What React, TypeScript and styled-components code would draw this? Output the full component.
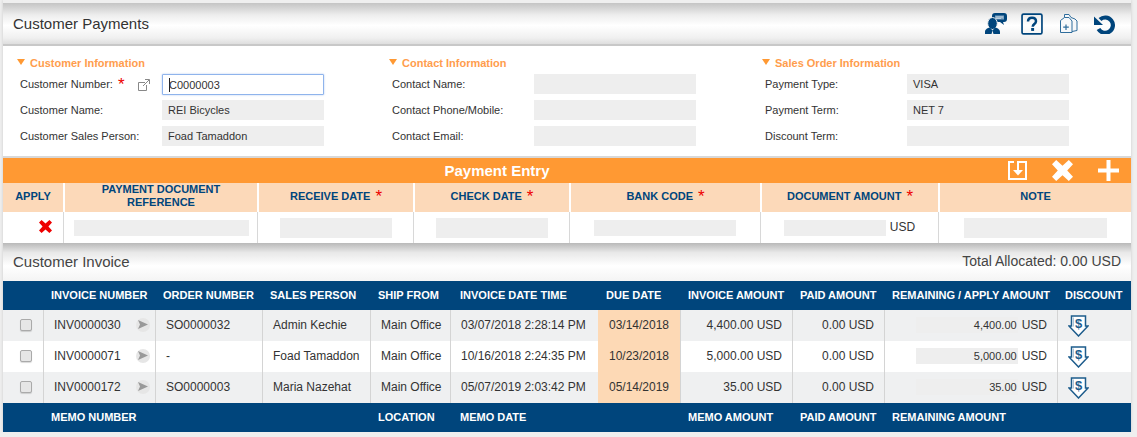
import styled, { createGlobalStyle } from "styled-components";

const GlobalStyle = createGlobalStyle`
  html, body {
    margin: 0;
    padding: 0;
    background: #efefef;
    font-family: "Liberation Sans", Arial, sans-serif;
    color: #333;
  }
`;

const ORANGE = "#ff9933";
const NAVY = "#00457c";
const PEACH = "#fcd9b9";
const FIELD = "#eeeeee";

const INVOICE_COLS = "40px 112px 107px 108px 80px 148px 82px 112px 92px 173px 74px";
const ENTRY_COLS = "60px 194px 156px 156px 191px 178px 193px";

const customerFields = [
  { label: "Customer Name:", value: "REI Bicycles" },
  { label: "Customer Sales Person:", value: "Foad Tamaddon" },
];

const contactFields = ["Contact Name:", "Contact Phone/Mobile:", "Contact Email:"];

const orderFields = [
  { label: "Payment Type:", value: "VISA" },
  { label: "Payment Term:", value: "NET 7" },
  { label: "Discount Term:", value: "" },
];

const entryHeads = [
  { text: "APPLY" },
  { text: "PAYMENT DOCUMENT REFERENCE", narrow: true },
  { text: "RECEIVE DATE", required: true },
  { text: "CHECK DATE", required: true },
  { text: "BANK CODE", required: true },
  { text: "DOCUMENT AMOUNT", required: true },
  { text: "NOTE" },
];

const invoiceHeads = [
  "",
  "INVOICE NUMBER",
  "ORDER NUMBER",
  "SALES PERSON",
  "SHIP FROM",
  "INVOICE DATE TIME",
  "DUE DATE",
  "INVOICE AMOUNT",
  "PAID AMOUNT",
  "REMAINING / APPLY AMOUNT",
  "DISCOUNT",
];

const memoHeads = [
  "",
  "MEMO NUMBER",
  "",
  "",
  "LOCATION",
  "MEMO DATE",
  "",
  "MEMO AMOUNT",
  "PAID AMOUNT",
  "REMAINING AMOUNT",
  "",
];

const invoices = [
  {
    number: "INV0000030",
    order: "SO0000032",
    person: "Admin Kechie",
    date: "03/07/2018 2:28:14 PM",
    due: "03/14/2018",
    amount: "4,400.00",
  },
  {
    number: "INV0000071",
    order: "-",
    person: "Foad Tamaddon",
    date: "10/16/2018 2:24:35 PM",
    due: "10/23/2018",
    amount: "5,000.00",
  },
  {
    number: "INV0000172",
    order: "SO0000003",
    person: "Maria Nazehat",
    date: "05/07/2019 2:03:42 PM",
    due: "05/14/2019",
    amount: "35.00",
  },
];

const SupportIcon = () => (
  <svg width="22" height="21" viewBox="0 0 22 21">
    <path
      d="M10 0h9a3 3 0 0 1 3 3v3a3 3 0 0 1-3 3h-1l1 3-4-3h-5a3 3 0 0 1-3-3V3a3 3 0 0 1 3-3z"
      fill={NAVY}
    />
    <path d="M10 2.500h9v4h-9z" fill="#7fa3c0" />
    <path d="M11 4h7M11 5.500h5" stroke="#d5e2ec" strokeWidth="0.700" />
    <ellipse cx="7.500" cy="10.500" rx="4.800" ry="6" fill={NAVY} stroke="#eef0f1" strokeWidth="1" />
    <path d="M0 21v-2c0-3 3-4 5-4.500l2.500 3 2.500-3c2 .5 5 1.500 5 4.500v2z" fill={NAVY} />
    <path d="M7.500 17.500l-1 3.500h2z" fill="#eef0f1" />
  </svg>
);

const HelpIcon = () => (
  <svg width="22" height="22" viewBox="0 0 21 21">
    <rect x="1" y="1" width="19" height="19" rx="1.500" fill="none" stroke={NAVY} strokeWidth="1.600" />
    <path
      d="M6.700 8.200C6.700 5.700 8.300 4.500 10.500 4.500s3.800 1.200 3.800 3.300c0 2.800-3.100 2.700-3.100 5.400"
      fill="none"
      stroke={NAVY}
      strokeWidth="2.400"
    />
    <rect x="9.700" y="14.300" width="2.800" height="2.800" fill={NAVY} />
  </svg>
);

const CopyIcon = () => (
  <svg width="18" height="19" viewBox="0 0 18 19">
    <path d="M4.500 3V.5h4.500l2 3 4 1.500 2 2v9.500l-5 1z" fill="#f6f8fa" stroke="#2f6d9c" strokeWidth="1" />
    <path d="M.5 6.500l4-3H9l3 3.500v11.500H.5z" fill="#f6f8fa" stroke="#2f6d9c" strokeWidth="1" />
    <path d="M6 10.500v5.500M3.200 13.200h5.600" stroke="#2f6d9c" strokeWidth="1.200" />
  </svg>
);

const UndoIcon = () => (
  <svg width="21" height="20" viewBox="0 0 21 20">
    <path d="M6 5.500A7.700 7.700 0 1 1 4.500 15" fill="none" stroke={NAVY} strokeWidth="4.200" />
    <path d="M0 2.500v8.500h9z" fill={NAVY} />
  </svg>
);

const SaveEntryIcon = () => (
  <svg width="19" height="19" viewBox="0 0 19 19" fill="none" stroke="#fff" strokeWidth="2">
    <path d="M6 1H1v17h17V1H10v8" />
    <path d="M5 9h10l-5 5.500z" fill="#fff" stroke="none" />
  </svg>
);

const RemoveIcon = ({ size, color }: { size: number; color: string }) => (
  <svg width={size} height={size} viewBox="0 0 20 20">
    <path
      d="M4 0l6 5.500L16 0l4 4-5.500 6 5.500 6-4 4-6-5.500L4 20l-4-4 5.500-6L0 4z"
      fill={color}
    />
  </svg>
);

const AddIcon = () => (
  <svg width="21" height="21" viewBox="0 0 21 21">
    <path d="M8.500 0h4v8.500H21v4h-8.500V21h-4v-8.500H0v-4h8.500z" fill="#fff" />
  </svg>
);

const OpenIcon = () => (
  <svg width="12" height="12" viewBox="0 0 12 12" fill="none" stroke="#888" strokeWidth="1">
    <path d="M7 3.500H.5v8h8V6" />
    <path d="M5 7l6-6M7 .5h4.500V5" />
  </svg>
);

const ArrowIcon = () => (
  <svg width="10" height="9" viewBox="0 0 10 9">
    <path d="M0 0l10 4.500L0 9l2-4.500z" fill="#999" />
  </svg>
);

const DiscountIcon = () => (
  <svg width="21" height="22" viewBox="0 0 21 22">
    <path
      d="M3.500 1h14v10h2.500l-9.500 10L1 11h2.500z"
      fill="#fff"
      stroke="#1d5c8c"
      strokeWidth="1.500"
    />
    <path d="M5.500 2.500v9" stroke="#a9c4da" strokeWidth="1" />
    <DollarText x="10.500" y="13" textAnchor="middle">
      $
    </DollarText>
  </svg>
);

export default function App() {
  return (
    <>
      <GlobalStyle />
      <Page>
        <TitleBar>
          <PageTitle>Customer Payments</PageTitle>
          <TitleIcons>
            <SupportIcon />
            <HelpIcon />
            <CopyIcon />
            <UndoIcon />
          </TitleIcons>
        </TitleBar>

        <FormArea>
          <FormSection $width="372px">
            <SectionHead>Customer Information</SectionHead>
            <FormRow $first>
              <FieldLabel>
                Customer Number:<Star $inline>*</Star>
              </FieldLabel>
              <OpenLink>
                <OpenIcon />
              </OpenLink>
              <ActiveInput>
                <Caret />
                C0000003
              </ActiveInput>
            </FormRow>
            {customerFields.map((f) => (
              <FormRow key={f.label}>
                <FieldLabel>{f.label}</FieldLabel>
                <FieldValue>{f.value}</FieldValue>
              </FormRow>
            ))}
          </FormSection>

          <FormSection $width="373px">
            <SectionHead>Contact Information</SectionHead>
            {contactFields.map((label, i) => (
              <FormRow key={label} $first={i === 0}>
                <FieldLabel>{label}</FieldLabel>
                <FieldValue />
              </FormRow>
            ))}
          </FormSection>

          <FormSection $width="370px">
            <SectionHead>Sales Order Information</SectionHead>
            {orderFields.map((f, i) => (
              <FormRow key={f.label} $first={i === 0}>
                <FieldLabel>{f.label}</FieldLabel>
                <FieldValue>{f.value}</FieldValue>
              </FormRow>
            ))}
          </FormSection>
        </FormArea>

        <EntryBar>
          <EntryTitle>Payment Entry</EntryTitle>
          <EntryActions>
            <SaveEntryIcon />
            <RemoveIcon size={21} color="#fff" />
            <AddIcon />
          </EntryActions>
        </EntryBar>

        <EntryHead>
          {entryHeads.map((h) => (
            <EntryHeadCell key={h.text}>
              <EntryHeadText $narrow={h.narrow}>
                {h.text}
                {h.required && <Star>*</Star>}
              </EntryHeadText>
            </EntryHeadCell>
          ))}
        </EntryHead>

        <EntryRow>
          <EntryCell $align="flex-end">
            <ApplyMark>
              <RemoveIcon size={13} color="#ee0000" />
            </ApplyMark>
          </EntryCell>
          <EntryCell $nudge>
            <EntryField $width="175px" $height="16px" />
          </EntryCell>
          <EntryCell>
            <EntryField $width="112px" />
          </EntryCell>
          <EntryCell>
            <EntryField $width="112px" />
          </EntryCell>
          <EntryCell>
            <EntryField $width="142px" $height="16px" />
          </EntryCell>
          <EntryCell>
            <EntryField $width="102px" $height="16px" />
            <Usd>USD</Usd>
          </EntryCell>
          <EntryCell>
            <EntryField $width="143px" />
          </EntryCell>
        </EntryRow>

        <InvoiceBar>
          <SubTitle>Customer Invoice</SubTitle>
          <Allocated>Total Allocated: 0.00 USD</Allocated>
        </InvoiceBar>

        <NavyRow>
          {invoiceHeads.map((h, i) => (
            <NavyCell key={i}>{h}</NavyCell>
          ))}
        </NavyRow>

        {invoices.map((inv, i) => (
          <InvoiceRow key={inv.number} $striped={i !== 1}>
            <CheckCell>
              <FakeCheck />
            </CheckCell>
            <DataCell $between>
              {inv.number}
              <ArrowBadge>
                <ArrowIcon />
              </ArrowBadge>
            </DataCell>
            <DataCell>{inv.order}</DataCell>
            <DataCell>{inv.person}</DataCell>
            <DataCell>Main Office</DataCell>
            <DataCell>{inv.date}</DataCell>
            <DueCell>{inv.due}</DueCell>
            <DataCell $right>{inv.amount} USD</DataCell>
            <DataCell $right>0.00 USD</DataCell>
            <ApplyCell>
              <ApplyField>{inv.amount}</ApplyField>
              <ApplyUnit>USD</ApplyUnit>
            </ApplyCell>
            <DiscountCell>
              <DiscountIcon />
            </DiscountCell>
          </InvoiceRow>
        ))}

        <NavyRow>
          {memoHeads.map((h, i) => (
            <NavyCell key={i}>{h}</NavyCell>
          ))}
        </NavyRow>
      </Page>
    </>
  );
}

const Page = styled.div`
  width: 1128px;
  margin-left: 3px;
  padding-top: 3px;
  box-shadow: 0 0 3px rgba(0, 0, 0, 0.15);
`;

const TitleBar = styled.header`
  display: flex;
  align-items: center;
  justify-content: space-between;
  height: 41px;
  padding: 0 16px 0 10px;
  background: linear-gradient(#c4c4c4 0, #eeeeee 30%, #ffffff 55%, #f0f0f0 85%, #dedede 100%);
  border-bottom: 2px solid #c8c8c8;
`;

const PageTitle = styled.h1`
  margin: 0;
  font-size: 15px;
  font-weight: 400;
  color: #333;
`;

const TitleIcons = styled.div`
  display: flex;
  align-items: center;
  svg:nth-child(2) {
    margin-left: 14px;
  }
  svg:nth-child(3) {
    margin-left: 17px;
  }
  svg:nth-child(4) {
    margin-left: 16px;
  }
`;

const FormArea = styled.section`
  display: flex;
  height: 112px;
  padding: 11px 0 0 13px;
  box-sizing: border-box;
  background: #fff;
  border-bottom: 2px solid #d8d8d8;
`;

const FormSection = styled.div<{ $width: string }>`
  width: ${(p) => p.$width};
  flex: none;
`;

const SectionHead = styled.div`
  position: relative;
  padding-left: 14px;
  height: 12px;
  line-height: 12px;
  font-size: 11px;
  font-weight: 700;
  color: #ff9d4d;
  &::before {
    content: "";
    position: absolute;
    left: 1px;
    top: 2px;
    border-left: 4.5px solid transparent;
    border-right: 4.5px solid transparent;
    border-top: 6px solid ${ORANGE};
  }
`;

const FormRow = styled.div<{ $first?: boolean }>`
  position: relative;
  display: flex;
  align-items: center;
  height: 20px;
  margin-top: ${(p) => (p.$first ? "5px" : "6px")};
  padding-left: 4px;
`;

const FieldLabel = styled.label`
  width: 142px;
  flex: none;
  font-size: 11px;
  color: #333;
  white-space: nowrap;
`;

const Star = styled.span<{ $inline?: boolean }>`
  display: inline-block;
  margin-left: 5px;
  color: #ee0000;
  font-size: 17px;
  line-height: 10px;
  vertical-align: -2px;
  font-weight: 400;
`;

const OpenLink = styled.span`
  position: absolute;
  left: 122px;
  top: 5px;
  display: flex;
`;

const FieldValue = styled.div`
  width: 162px;
  height: 20px;
  padding-left: 6px;
  box-sizing: border-box;
  background: ${FIELD};
  font-size: 11px;
  line-height: 20px;
  color: #333;
`;

const ActiveInput = styled.div`
  display: flex;
  align-items: center;
  align-self: flex-start;
  flex: none;
  width: 162px;
  height: 21px;
  padding-left: 6px;
  box-sizing: border-box;
  background: #fff;
  border: 1.500px solid #8fb4ec;
  border-radius: 1px;
  box-shadow: 0 0 2px rgba(120, 160, 230, 0.6);
  font-size: 11px;
  color: #333;
`;

const Caret = styled.span`
  width: 1px;
  height: 14px;
  margin-right: -1px;
  background: #222;
`;

const EntryBar = styled.div`
  position: relative;
  display: flex;
  align-items: center;
  justify-content: center;
  height: 25px;
  padding-right: 140px;
  background: ${ORANGE};
`;

const EntryTitle = styled.div`
  color: #fff;
  font-size: 15px;
  font-weight: 700;
`;

const EntryActions = styled.div`
  position: absolute;
  right: 12px;
  top: 2px;
  display: flex;
  align-items: center;
  gap: 25px;
`;

const EntryHead = styled.div`
  display: grid;
  grid-template-columns: ${ENTRY_COLS};
  height: 29px;
  background: ${PEACH};
`;

const EntryHeadCell = styled.div`
  display: flex;
  align-items: center;
  justify-content: center;
  padding-bottom: 3px;
  box-sizing: border-box;
  border-left: 2px solid #fff;
  &:first-child {
    border-left: none;
  }
`;

const EntryHeadText = styled.div<{ $narrow?: boolean }>`
  width: ${(p) => (p.$narrow ? "150px" : "auto")};
  text-align: center;
  color: ${NAVY};
  font-size: 11px;
  font-weight: 700;
  line-height: 13px;
`;

const EntryRow = styled.div`
  display: grid;
  grid-template-columns: ${ENTRY_COLS};
  height: 31px;
  background: #fff;
`;

const EntryCell = styled.div<{ $align?: string; $nudge?: boolean }>`
  display: flex;
  align-items: center;
  justify-content: ${(p) => p.$align || "center"};
  padding-left: ${(p) => (p.$nudge ? "2px" : "0")};
  border-left: 1px solid #d8d8d8;
  &:first-child {
    border-left: none;
  }
`;

const ApplyMark = styled.span`
  display: flex;
  margin: 0 11px 3px 0;
`;

const EntryField = styled.div<{ $width: string; $height?: string }>`
  width: ${(p) => p.$width};
  height: ${(p) => p.$height || "20px"};
  background: ${FIELD};
`;

const Usd = styled.span`
  margin: 0 0 2px 4px;
  font-size: 12px;
  color: #333;
`;

const InvoiceBar = styled.div`
  display: flex;
  align-items: center;
  justify-content: space-between;
  height: 38px;
  padding: 0 10px 2px;
  box-sizing: border-box;
  background: linear-gradient(#b9b9b9 0, #e8e8e8 25%, #ffffff 60%, #f4f4f4 100%);
`;

const SubTitle = styled.div`
  font-size: 15px;
  color: #444;
`;

const Allocated = styled.div`
  font-size: 14px;
  color: #444;
`;

const NavyRow = styled.div`
  display: grid;
  grid-template-columns: ${INVOICE_COLS};
  height: 29px;
  background: ${NAVY};
`;

const NavyCell = styled.div`
  display: flex;
  align-items: center;
  padding: 0 0 2px 8px;
  color: #fff;
  font-size: 11px;
  font-weight: 700;
  white-space: nowrap;
  &:nth-child(6) {
    padding-left: 10px;
  }
`;

const InvoiceRow = styled.div<{ $striped: boolean }>`
  display: grid;
  grid-template-columns: ${INVOICE_COLS};
  height: 31px;
  background: ${(p) => (p.$striped ? "#eff0f1" : "#fff")};
`;

const CheckCell = styled.div`
  display: flex;
  align-items: center;
  justify-content: center;
  padding: 0 0 2px 6px;
`;

const FakeCheck = styled.span`
  width: 12px;
  height: 12px;
  box-sizing: border-box;
  border: 1px solid #aaa;
  border-radius: 2px;
  background: #e6e6e6;
  box-shadow: 0 1px 1px rgba(0, 0, 0, 0.15);
`;

const DataCell = styled.div<{ $right?: boolean; $between?: boolean }>`
  display: flex;
  align-items: center;
  justify-content: ${(p) =>
    p.$right ? "flex-end" : p.$between ? "space-between" : "flex-start"};
  padding: ${(p) => (p.$right ? "0 10px 2px 0" : p.$between ? "0 5px 2px 10px" : "0 0 2px 10px")};
  border-left: 1px solid #d4d4d4;
  font-size: 12px;
  color: #333;
  white-space: nowrap;
`;

const ArrowBadge = styled.span`
  display: flex;
  align-items: center;
  justify-content: center;
  width: 14px;
  height: 14px;
  border-radius: 50%;
  background: #e6e6e6;
`;

const DueCell = styled.div`
  display: flex;
  align-items: center;
  justify-content: center;
  padding-bottom: 2px;
  background: #fdd9b5;
  font-size: 12px;
  color: #333;
`;

const ApplyCell = styled.div`
  display: flex;
  align-items: center;
  justify-content: flex-end;
  padding: 0 10px 1px 0;
  border-left: 1px solid #d4d4d4;
`;

const ApplyField = styled.div`
  width: 102px;
  height: 16px;
  box-sizing: border-box;
  padding-right: 1px;
  background: #eeeeee;
  text-align: right;
  font-size: 11px;
  line-height: 16px;
  color: #333;
`;

const ApplyUnit = styled.span`
  margin-left: 4px;
  font-size: 12px;
  color: #333;
`;

const DiscountCell = styled.div`
  display: flex;
  align-items: center;
  padding-left: 10px;
  border-left: 1px solid #d4d4d4;
`;

const DollarText = styled.text`
  font-family: "Liberation Sans", Arial, sans-serif;
  font-size: 13px;
  font-weight: 700;
  fill: #1d5c8c;
`;
